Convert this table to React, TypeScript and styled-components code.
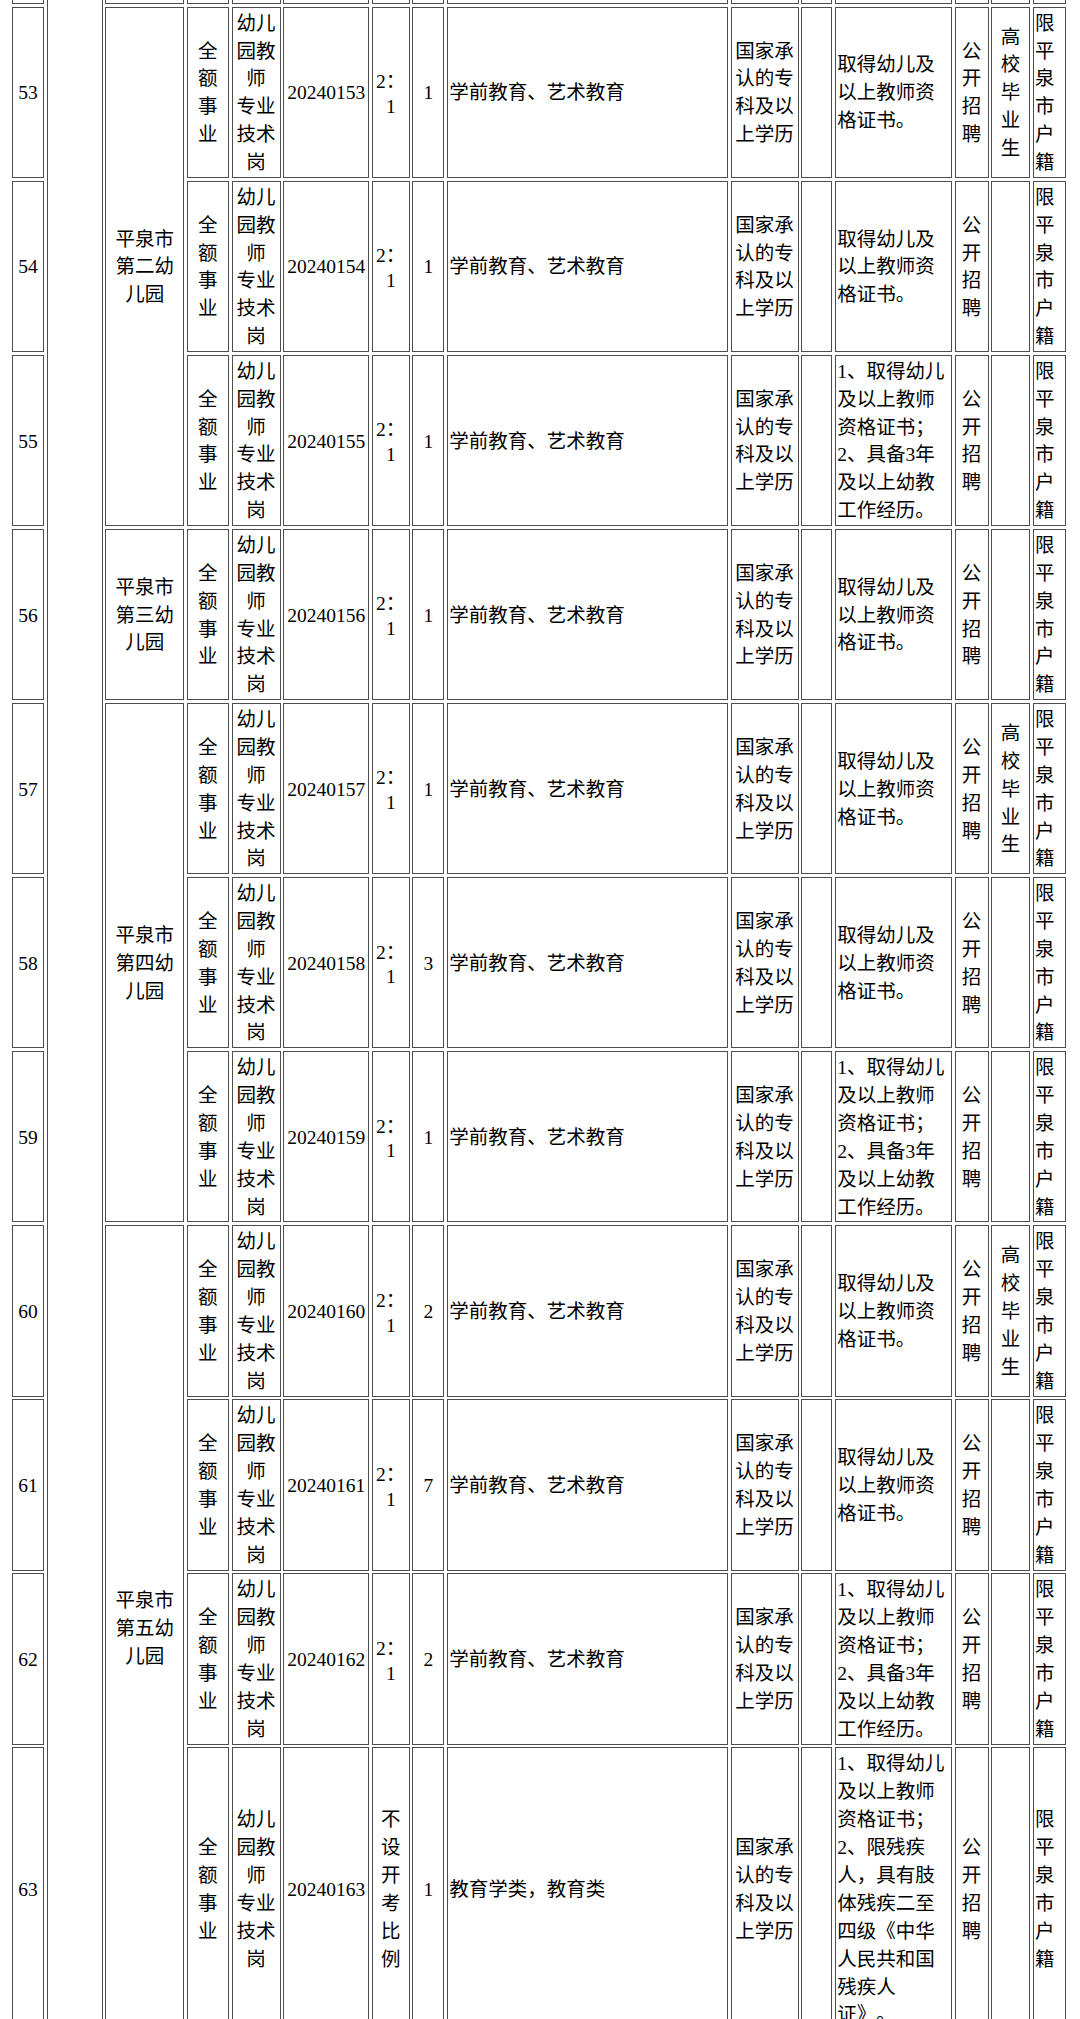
import styled, { createGlobalStyle } from "styled-components";
import { Fragment } from "react";

const GlobalStyle = createGlobalStyle`
  html, body {
    margin: 0;
    padding: 0;
    background: #ffffff;
  }
`;

// clipped window onto a long recruitment table
const Viewport = styled.div`
  width: 1080px;
  height: 2019px;
  overflow: hidden;
  background: #ffffff;
`;

const Sheet = styled.div`
  display: grid;
  grid-template-columns: 32px 56px 79px 42px 49px 86px 38px 32px 281px 68px 31px 117px 34px 39px 33px;
  gap: 2.64px;
  margin: -40px 0 0 12px;
  width: max-content;

  font-family: "Liberation Serif", "Noto Sans CJK SC", serif;
  font-size: 19.5px;
  line-height: 27.9px;
  color: #000000;
  text-spacing-trim: space-all;
`;

const Cell = styled.div<{ $align?: "left" | "center"; $rows?: number }>`
  box-sizing: border-box;
  border: 1px solid #4d4d4d;
  padding: 2px 1.3px 0;
  min-width: 0;

  display: flex;
  flex-direction: column;
  justify-content: center;
  text-align: ${(p) => p.$align ?? "center"};
  grid-row: ${(p) => (p.$rows ? `span ${p.$rows}` : "auto")};
`;

// bottom edge of the row scrolled off above the window
const TailCell = styled(Cell)`
  height: 44px;
`;

// a line of latin digits only is shorter than a line with han text
const Denominator = styled.span`
  display: block;
  line-height: 22.4px;
`;

const COND_A = "取得幼儿及以上教师资格证书。";
const COND_B = "1、取得幼儿及以上教师资格证书；2、具备3年及以上幼教工作经历。";
const COND_C =
  "1、取得幼儿及以上教师资格证书；2、限残疾人，具有肢体残疾二至四级《中华人民共和国残疾人证》。";

const COLUMNS = 15;

interface Post {
  no: number;
  unit?: { name: string; rows: number };
  count: number;
  ratio?: string;
  major?: string;
  cond: string;
  target?: string;
}

const posts: Post[] = [
  { no: 53, unit: { name: "平泉市第二幼儿园", rows: 3 }, count: 1, cond: COND_A, target: "高校毕业生" },
  { no: 54, count: 1, cond: COND_A },
  { no: 55, count: 1, cond: COND_B },
  { no: 56, unit: { name: "平泉市第三幼儿园", rows: 1 }, count: 1, cond: COND_A },
  { no: 57, unit: { name: "平泉市第四幼儿园", rows: 3 }, count: 1, cond: COND_A, target: "高校毕业生" },
  { no: 58, count: 3, cond: COND_A },
  { no: 59, count: 1, cond: COND_B },
  { no: 60, unit: { name: "平泉市第五幼儿园", rows: 4 }, count: 2, cond: COND_A, target: "高校毕业生" },
  { no: 61, count: 7, cond: COND_A },
  { no: 62, count: 2, cond: COND_B },
  {
    no: 63,
    count: 1,
    ratio: "不设开考比例",
    major: "教育学类，教育类",
    cond: COND_C,
  },
];

function App() {
  return (
    <Viewport lang="zh-CN">
      <GlobalStyle />
      <Sheet>
        {/* previous row, only its bottom border is in view */}
        <TailCell />
        <Cell $rows={posts.length + 1} />
        {Array.from({ length: COLUMNS - 2 }, (_, i) => (
          <TailCell key={i} />
        ))}

        {posts.map((p) => (
          <Fragment key={p.no}>
            <Cell>{p.no}</Cell>
            {p.unit && <Cell $rows={p.unit.rows}>{p.unit.name}</Cell>}
            <Cell>全额事业</Cell>
            <Cell>
              幼儿园教师
              <br />
              专业技术岗
            </Cell>
            <Cell>{`202401${p.no}`}</Cell>
            <Cell>
              {p.ratio ?? (
                <>
                  2：<Denominator>1</Denominator>
                </>
              )}
            </Cell>
            <Cell>{p.count}</Cell>
            <Cell $align="left">{p.major ?? "学前教育、艺术教育"}</Cell>
            <Cell>国家承认的专科及以上学历</Cell>
            <Cell />
            <Cell $align="left">{p.cond}</Cell>
            <Cell>公开招聘</Cell>
            <Cell>{p.target ?? ""}</Cell>
            <Cell $align="left">限平泉市户籍</Cell>
          </Fragment>
        ))}
      </Sheet>
    </Viewport>
  );
}

export default App;
